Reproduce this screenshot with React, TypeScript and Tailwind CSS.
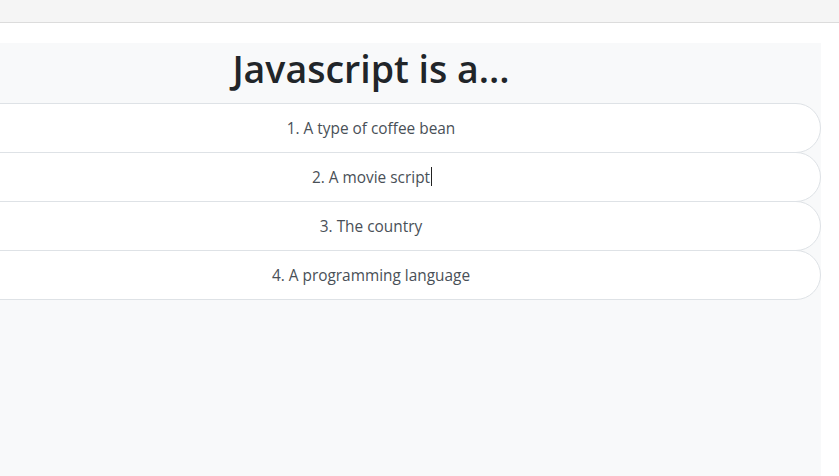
import React from "react";

const options = [
  "1. A type of coffee bean",
  "2. A movie script",
  "3. The country",
  "4. A programming language",
];

export default function App() {
  return (
    <div className="w-[839px] h-[476px] overflow-hidden bg-white" style={{ fontFamily: '"Open Sans", "Noto Sans", sans-serif' }}>
      <div className="h-[23px] bg-[#f5f5f5] border-b border-[#dcdcdc]" />
      <div className="h-[20px]" />
      <div className="ml-[-79px] w-[900px] h-[433px] bg-[#f8f9fa]">
        <h1 className="h-[60px] flex items-center justify-center text-[37.5px] font-semibold text-[#212529] leading-none pb-[8px]">
          Javascript is a...
        </h1>
        <div className="flex flex-col">
          {options.map((o, i) => (
            <div
              key={o}
              className={`h-[50px] bg-white border border-[#dee2e6] rounded-r-[25px] flex items-center justify-center pt-[2px] text-[15.4px] text-[#495057] ${i > 0 ? "-mt-px" : ""}`}
            >
              <span className="relative">
                {o}
                {i === 1 && <span className="absolute right-[-2px] top-[1px] w-px h-[19px] bg-[#222]" />}
              </span>
            </div>
          ))}
        </div>
      </div>
    </div>
  );
}
